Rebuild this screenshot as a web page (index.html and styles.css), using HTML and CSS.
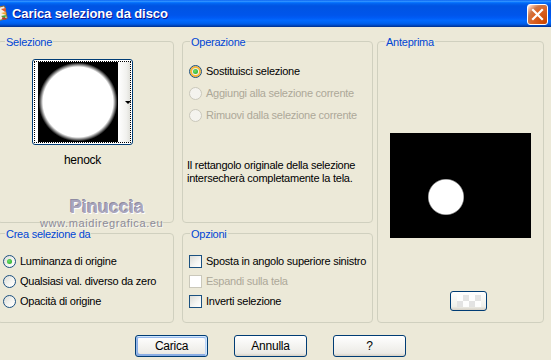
FILE: index.html
```html
<!DOCTYPE html>
<html>
<head>
<meta charset="utf-8">
<link rel="stylesheet" href="styles.css">
</head>
<body>
<div class="titlebar">
  <svg class="appicon" width="16" height="16" viewBox="0 0 16 16">
    <rect x="3" y="2" width="11" height="13" rx="1" fill="#F3EFE2" stroke="#8A6A3A" stroke-width="1" transform="rotate(-12 8 8)"/>
    <path d="M9 4 L14 3 L13 7 Z" fill="#E8582A"/>
    <path d="M9 8 L14 7 L14 10 Z" fill="#F2A22C"/>
    <path d="M9 11 L14 10 L13 14 Z" fill="#3FA33A"/>
    <path d="M10 13 L14 14" stroke="#C0302A" stroke-width="1.5"/>
  </svg>
  <span class="title">Carica selezione da disco</span>
  <div class="close">
    <svg width="19" height="19" viewBox="0 0 19 19"><path d="M5 5 L14 14 M14 5 L5 14" stroke="#fff" stroke-width="2.2" stroke-linecap="square"/></svg>
  </div>
</div>

<div class="main">
  <div class="col col-left">
    <div class="group g-sel">
      <span class="legend">Selezione</span>
      <div class="thumb">
        <div class="thumb-focus">
          <div class="thumb-img"></div>
          <div class="thumb-strip"><span class="arrow"></span></div>
        </div>
      </div>
      <div class="thumb-name">henock</div>
    </div>
    <div class="group g-crea">
      <span class="legend">Crea selezione da</span>
      <div class="opt"><span class="radio checked"></span>Luminanza di origine</div>
      <div class="opt"><span class="radio"></span>Qualsiasi val. diverso da zero</div>
      <div class="opt"><span class="radio"></span>Opacità di origine</div>
    </div>
  </div>

  <div class="col col-mid">
    <div class="group g-op">
      <span class="legend">Operazione</span>
      <div class="opt tall"><span class="radio checked hot"></span>Sostituisci selezione</div>
      <div class="opt tall disabled"><span class="radio"></span>Aggiungi alla selezione corrente</div>
      <div class="opt tall disabled"><span class="radio"></span>Rimuovi dalla selezione corrente</div>
      <p class="desc">Il rettangolo originale della selezione<br>intersecherà completamente la tela.</p>
    </div>
    <div class="group g-opz">
      <span class="legend">Opzioni</span>
      <div class="opt"><span class="check"></span>Sposta in angolo superiore sinistro</div>
      <div class="opt disabled"><span class="check"></span>Espandi sulla tela</div>
      <div class="opt"><span class="check"></span>Inverti selezione</div>
    </div>
  </div>

  <div class="group g-ant">
    <span class="legend">Anteprima</span>
    <div class="preview"></div>
    <div class="smallbtn"><span class="checker"></span></div>
  </div>
</div>

<div class="buttons">
  <div class="btn default">Carica</div>
  <div class="btn">Annulla</div>
  <div class="btn">?</div>
</div>

<div class="watermark">
  <div class="wm1">Pinuccia</div>
  <div class="wm2">www.maidiregrafica.eu</div>
</div>
</body>
</html>
```

FILE: styles.css
```css
html, body {
  margin: 0;
  padding: 0;
}
body {
  width: 551px;
  height: 360px;
  overflow: hidden;
  position: relative;
  background: #ECE9D8;
  font-family: "Liberation Sans", Arial, sans-serif;
  font-size: 11px;
  letter-spacing: -0.25px;
  color: #000;
}

/* Title bar */
.titlebar {
  height: 27px;
  display: flex;
  align-items: center;
  background: linear-gradient(to bottom, #0058ee 0%, #3593ff 4%, #288eff 6%, #127dff 8%, #036ffc 10%, #0262ee 14%, #0057e5 20%, #0054e3 24%, #0055eb 56%, #005bf5 66%, #026afe 76%, #0062ef 86%, #0052d6 92%, #0040ab 96%, #003092 100%);
}
.appicon {
  margin-left: -8px;
  margin-top: -2px;
  flex: none;
}
.title {
  margin-left: 4px;
  color: #fff;
  font-weight: bold;
  font-size: 13px;
  letter-spacing: -0.1px;
  text-shadow: 1px 1px #0F1089;
}
.close {
  margin-left: auto;
  margin-right: 3px;
  margin-top: 1px;
  width: 21px;
  height: 21px;
  box-sizing: border-box;
  border: 1px solid #fff;
  border-radius: 3px;
  background: radial-gradient(circle at 90% 90%, #cc4600 0%, #dc6527 55%, #cd7546 70%, #ffccb2 90%, #fff 100%);
  display: flex;
  align-items: center;
  justify-content: center;
}

/* Layout */
.main {
  display: flex;
  margin-left: -3px;
  padding-top: 14px;
}
.col {
  display: flex;
  flex-direction: column;
  gap: 10px;
}
.col-left { width: 177px; }
.col-mid { width: 191px; margin-left: 8px; }

.group {
  position: relative;
  box-sizing: border-box;
  border: 1px solid #D0D0BF;
  border-radius: 4px;
}
.legend {
  position: absolute;
  top: -6px;
  left: 7px;
  padding: 0 1px;
  line-height: 12px;
  background: #ECE9D8;
  color: #0046D5;
}

/* Selezione */
.g-sel {
  height: 182px;
  padding: 17px 0 0 34px;
}
.thumb {
  width: 101px;
  box-sizing: border-box;
  border: 1px solid #003C74;
  border-radius: 3px;
  padding: 1px;
  background: #fff;
}
.thumb-focus {
  display: flex;
  border: 1px dotted #000;
  padding-left: 3px;
}
.thumb-img {
  width: 80px;
  height: 80px;
  background: radial-gradient(circle at 50% 50%, #fff 35px, #000 39.5px);
}
.thumb-strip {
  width: 12px;
  display: flex;
  align-items: center;
  justify-content: flex-end;
  background: linear-gradient(to right, #fff, #F1F1EE 70%, #E2E2DC);
}
.arrow {
  width: 0;
  height: 0;
  border-left: 3px solid transparent;
  border-right: 3px solid transparent;
  border-top: 3px solid #000;
  margin-right: -1px;
}
.thumb-name {
  width: 101px;
  text-align: center;
  margin-top: 9px;
  line-height: 13px;
  font-size: 12px;
}

/* Option rows */
.opt {
  display: flex;
  align-items: center;
  height: 20px;
  white-space: nowrap;
}
.opt.tall { height: 22px; }
.opt.disabled { color: #ACA899; }

.radio {
  flex: none;
  width: 13px;
  height: 13px;
  box-sizing: border-box;
  border: 1px solid #1C5180;
  border-radius: 50%;
  background: linear-gradient(135deg, #DCDCD7 0%, #F6F6F3 60%, #fff 100%);
  margin-right: 4px;
  position: relative;
}
.radio.checked::after {
  content: "";
  position: absolute;
  left: 3px;
  top: 3px;
  width: 5px;
  height: 5px;
  border-radius: 50%;
  background: radial-gradient(circle at 40% 40%, #6BE06A, #21A121);
}
.radio.hot {
  box-shadow: inset 0 0 0 2px #F8B636;
}
.opt.disabled .radio {
  border-color: #CAC8BB;
  background: #F4F3EE;
}

.check {
  flex: none;
  width: 13px;
  height: 13px;
  box-sizing: border-box;
  border: 1px solid #1C5180;
  background: linear-gradient(135deg, #DCDCD7 0%, #F6F6F3 60%, #fff 100%);
  margin-right: 4px;
}
.opt.disabled .check {
  border-color: #CAC8BB;
  background: #fff;
}

/* Crea selezione da */
.g-crea {
  height: 90px;
  padding: 17px 0 0 5px;
}

/* Operazione */
.g-op {
  height: 182px;
  padding: 18px 0 0 6px;
}
.desc {
  margin: 33px 0 0 -2px;
  line-height: 13px;
}

/* Opzioni */
.g-opz {
  height: 90px;
  padding: 17px 0 0 6px;
}

/* Anteprima */
.g-ant {
  width: 167px;
  height: 282px;
  margin-left: 4px;
  padding: 91px 0 0 12px;
}
.preview {
  width: 141px;
  height: 105px;
  background: radial-gradient(circle at 56px 64px, #fff 17px, #000 18.5px);
}
.smallbtn {
  margin: 53px 0 0 60px;
  width: 37px;
  height: 20px;
  box-sizing: border-box;
  border: 1px solid #003C74;
  border-radius: 3px;
  background: linear-gradient(180deg, #fff 0%, #F0F0EA 80%, #D6D0C5 100%);
  display: flex;
  align-items: center;
  justify-content: center;
}
.checker {
  width: 24px;
  height: 12px;
  background-color: #fff;
  background-image: conic-gradient(#E2E2E2 25%, #fff 0 50%, #E2E2E2 0 75%, #fff 0);
  background-size: 12px 12px;
  opacity: 0.9;
}

/* Buttons */
.buttons {
  display: flex;
  gap: 26px;
  padding-left: 135px;
  margin-top: 12px;
}
.btn {
  width: 73px;
  height: 22px;
  box-sizing: border-box;
  border: 1px solid #003C74;
  border-radius: 3px;
  background: linear-gradient(180deg, #fff 0%, #ECEBE6 86%, #D6D0C5 100%);
  display: flex;
  align-items: center;
  justify-content: center;
  font-size: 12px;
}
.btn.default {
  box-shadow: inset -1px 1px #cee7ff, inset 1px 2px #98b8ea, inset -2px 2px #bcd4f6, inset 1px -1px #89ade4, inset 2px -2px #89ade4;
}

/* Watermark overlay */
.watermark {
  position: absolute;
  left: 40px;
  top: 196px;
  pointer-events: none;
  letter-spacing: 0;
}
.wm1 {
  margin-left: 30px;
  font-weight: bold;
  font-size: 18px;
  line-height: 22px;
  color: #A9A6BC;
  text-shadow: 1px 1px #fff, -1px -1px #8E8BA2;
}
.wm2 {
  font-size: 11px;
  line-height: 10px;
  color: #8C8B98;
  letter-spacing: 0.6px;
  text-shadow: 1px 1px rgba(255,255,255,0.6);
}
```
